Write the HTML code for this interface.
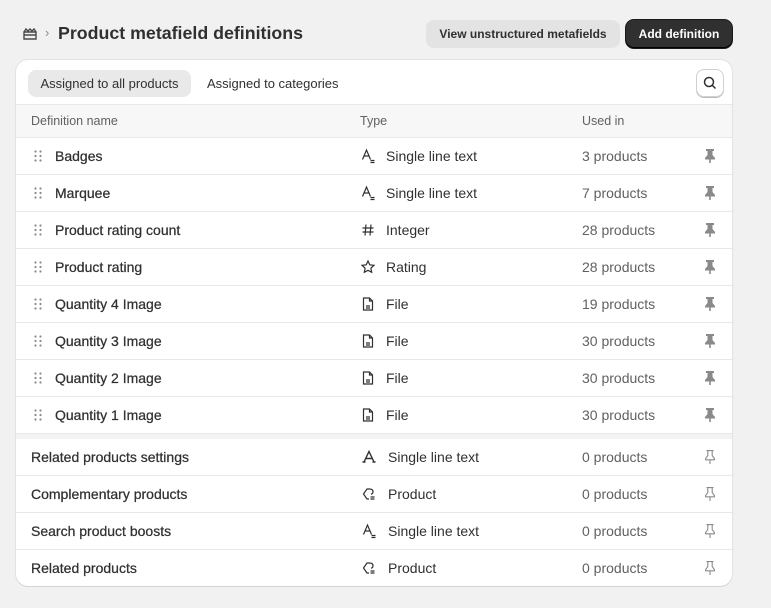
<!DOCTYPE html><html><head><style>
*{box-sizing:border-box;margin:0;padding:0}
body{width:771px;height:608px;background:#f1f1f1;font-family:"Liberation Sans",sans-serif;color:#303030;position:relative;overflow:hidden;font-size:13px}
.abs{position:absolute}
.title{left:58px;top:23px;font-size:17.8px;font-weight:bold;color:#303030}
.btn{top:20px;height:28px;border-radius:8px;font-size:12px;font-weight:bold;line-height:28px;text-align:center}
.card{left:16px;top:60px;width:716px;height:526px;background:#fff;border-radius:12px;box-shadow:0 1px 0 #d4d4d4,0 0 0 1px #e3e3e3;overflow:hidden}
.row{position:absolute;left:0;width:716px;height:37px;border-top:1px solid #e8e8e8;line-height:37px;font-size:14px}
.row span{position:absolute}
.row svg{display:block}
.nm{-webkit-text-stroke:0.25px #303030;color:#303030}
.muted{color:#616161}
</style></head><body>
<svg class="abs" style="left:22px;top:27px" width="16" height="14" viewBox="0 0 16 14" fill="none" stroke="#4a4a4a" stroke-width="1.4"><path d="M2 5h12v7H2z M2 5l2-3 2 2 2-2 2 2 2-2 2 3 M2 8h12"/></svg>
<div class="abs" style="left:45px;top:25px;color:#8a8a8a;font-size:13px">›</div>
<div class="abs title">Product metafield definitions</div>
<div class="abs btn" style="left:426px;width:194px;background:#e3e3e3;color:#303030">View unstructured metafields</div>
<div class="abs btn" style="left:626px;width:106px;background:#303030;color:#fff;box-shadow:inset 0 -1px 0 #000,0 0 0 1px #1a1a1a">Add definition</div>
<div class="abs card">
<div class="abs" style="left:12px;top:10px;width:163px;height:27px;background:#e9e9e9;border-radius:8px;font-size:13px;line-height:27px;text-align:center">Assigned to all products</div>
<div class="abs" style="left:191px;top:10px;font-size:13px;line-height:27px">Assigned to categories</div>
<div class="abs" style="left:680px;top:9px;width:28px;height:28px;border-radius:8px;border:1px solid #d0d0d0;box-shadow:0 1px 0 #bbb"><svg width="26" height="26" viewBox="0 0 26 26" fill="none" stroke="#303030" stroke-width="1.5"><circle cx="12" cy="12" r="4.5"/><path d="M15.3 15.3l3.2 3.2"/></svg></div>
<div class="row" style="top:44px;height:33px;background:#f7f7f7;line-height:32px;font-size:12.5px;color:#616161"><span style="left:15px">Definition name</span><span style="left:344px">Type</span><span style="left:566px">Used in</span></div>
<div id="rows"></div>
<div class="abs" style="left:0;top:373px;width:716px;height:6px;background:#f3f3f3;border-top:1px solid #e8e8e8"></div>
</div>
<script>
const A='<svg width="16" height="16" viewBox="0 0 16 16" fill="none" stroke="#303030" stroke-width="1.2"><path d="M2.5 11.5L6.5 2l4 9.5M4 8h5M10.5 12.5h4M10.5 14.5h4"/></svg>';
const A2='<svg width="16" height="16" viewBox="0 0 16 16" fill="none" stroke="#303030" stroke-width="1.4"><path d="M3 13L8 2.5 13 13M5 9.5h6M1.5 13h3M11.5 13h3"/></svg>';
const H='<svg width="16" height="16" viewBox="0 0 16 16" fill="none" stroke="#303030" stroke-width="1.2"><path d="M6 2.5L5 13.5M11 2.5l-1 11M2.5 6h11M2.5 10h11"/></svg>';
const S='<svg width="16" height="16" viewBox="0 0 16 16" fill="none" stroke="#303030" stroke-width="1.2"><path d="M8 2l1.8 3.8 4.2.5-3.1 2.9.8 4.1L8 11.3 4.3 13.3l.8-4.1L2 6.3l4.2-.5z"/></svg>';
const F='<svg width="16" height="16" viewBox="0 0 16 16" fill="none" stroke="#303030" stroke-width="1.2"><path d="M3.5 2h6l3 3v9h-9z M9.5 2v3h3 M6 10h4M6 12h4"/></svg>';
const P='<svg width="16" height="16" viewBox="0 0 16 16" fill="none" stroke="#303030" stroke-width="1.2"><path d="M8.5 3H6L2.5 8 6 13h2 M8.5 3c2.5 0 3.5 1.3 3.5 2.8S11 8 10 8.3 M9.5 11h4M9.5 13h4"/></svg>';
const pinF='<svg width="14" height="16" viewBox="0 0 14 16"><path d="M3 1h8v2H9.5v4l2.5 3v1.5H7.8V15H6.2v-3.5H2V10l2.5-3V3H3z" fill="#8a8a8a"/></svg>';
const pinO='<svg width="14" height="16" viewBox="0 0 14 16" fill="none" stroke="#8a8a8a" stroke-width="1.1"><path d="M3.5 1.6h7M4.8 1.6v5L2.6 9.6v1.2h8.8V9.6L9.2 6.6v-5M7 10.8V15"/></svg>';
const drag='<svg width="8" height="12" viewBox="0 0 8 12" fill="#8a8a8a"><circle cx="1.5" cy="1.5" r="1.1"/><circle cx="6.5" cy="1.5" r="1.1"/><circle cx="1.5" cy="6" r="1.1"/><circle cx="6.5" cy="6" r="1.1"/><circle cx="1.5" cy="10.5" r="1.1"/><circle cx="6.5" cy="10.5" r="1.1"/></svg>';
const pinned=[["Badges",A,"Single line text","3 products"],["Marquee",A,"Single line text","7 products"],["Product rating count",H,"Integer","28 products"],["Product rating",S,"Rating","28 products"],["Quantity 4 Image",F,"File","19 products"],["Quantity 3 Image",F,"File","30 products"],["Quantity 2 Image",F,"File","30 products"],["Quantity 1 Image",F,"File","30 products"]];
const un=[["Related products settings",A2,"Single line text"],["Complementary products",P,"Product"],["Search product boosts",A,"Single line text"],["Related products",P,"Product"]];
let h='';
pinned.forEach((r,i)=>{h+=`<div class="row" style="top:${77+i*37}px"><span style="left:18px;top:12px">${drag}</span><span class="nm" style="left:39px">${r[0]}</span><span style="left:344px;top:10px">${r[1]}</span><span style="left:370px">${r[2]}</span><span class="muted" style="left:566px">${r[3]}</span><span style="left:687px;top:10px">${pinF}</span></div>`});
un.forEach((r,i)=>{h+=`<div class="row" style="top:${378+i*37}px"><span class="nm" style="left:15px">${r[0]}</span><span style="left:345px;top:10px">${r[1]}</span><span style="left:372px">${r[2]}</span><span class="muted" style="left:566px">0 products</span><span style="left:687px;top:10px">${pinO}</span></div>`});
document.getElementById('rows').innerHTML=h;
</script>
</body></html>
